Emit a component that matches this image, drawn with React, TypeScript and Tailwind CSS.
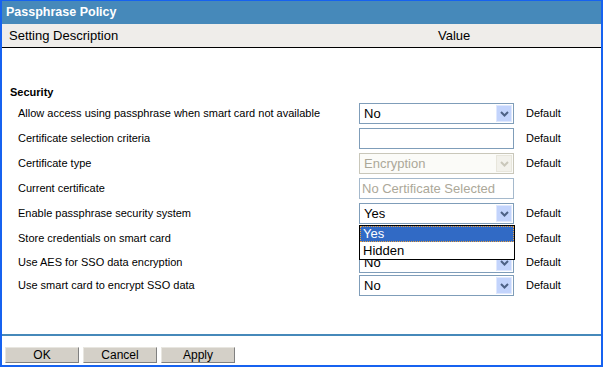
import React from "react";

const font = { fontFamily: '"Liberation Sans", Arial, sans-serif' };

function Arrow({ disabled }: { disabled?: boolean }) {
  return (
    <div
      className={
        disabled
          ? "absolute right-[1px] top-[1px] w-[16px] h-[17px] bg-[#f2f1eb] border border-[#e8e6dc] flex items-center justify-center"
          : "absolute right-[1px] top-[1px] w-[16px] h-[17px] bg-[#c3d4fc] border border-[#dfe8fe] flex items-center justify-center"
      }
    >
      <svg width="9" height="6" viewBox="0 0 9 6">
        <polyline
          points="1,1 4.5,4.5 8,1"
          fill="none"
          stroke={disabled ? "#c9c7ba" : "#4d6185"}
          strokeWidth="2"
        />
      </svg>
    </div>
  );
}

function Select({ value, disabled, children }: { value: string; disabled?: boolean; children?: React.ReactNode }) {
  return (
    <div
      className={
        disabled
          ? "relative w-[155px] h-[21px] border border-[#c9c7ba] bg-[#fbfbf8] flex items-center pl-[4px] text-[13px] text-[#aca899]"
          : "relative w-[155px] h-[21px] border border-[#7f9db9] bg-white flex items-center pl-[4px] text-[13px] text-black"
      }
    >
      <span className="leading-none">{value}</span>
      <Arrow disabled={disabled} />
      {children}
    </div>
  );
}

function Input({ value, disabled }: { value?: string; disabled?: boolean }) {
  return (
    <div
      className={
        disabled
          ? "w-[155px] h-[21px] border border-[#a5b9cc] bg-white flex items-center pl-[2px] text-[13px] text-[#aca899]"
          : "w-[155px] h-[21px] border border-[#7f9db9] bg-white flex items-center pl-[2px] text-[13px]"
      }
    >
      <span className="leading-none">{value}</span>
    </div>
  );
}

function Row({
  label,
  control,
  def = true,
  h = "h-[25px]",
}: {
  label: string;
  control: React.ReactNode;
  def?: boolean;
  h?: string;
}) {
  return (
    <div className={"flex items-center pl-4 " + h}>
      <div className="w-[341px] text-[11px] text-black">{label}</div>
      {control}
      {def && <div className="ml-[12px] text-[11px] text-black">Default</div>}
    </div>
  );
}

export default function App() {
  return (
    <div
      style={font}
      className="w-[603px] h-[367px] flex flex-col border-l-2 border-r-2 border-t border-b-2 border-[#1662f0] bg-white"
    >
      <div className="h-[23px] bg-[#4689ba] text-white font-bold text-[12.5px] pl-[4px] flex items-center">
        Passphrase Policy
      </div>
      <div className="h-[24px] bg-[#efedea] border-b border-black flex items-center text-[13px] text-black">
        <div className="w-[436px] pl-[7px]">Setting Description</div>
        <div>Value</div>
      </div>
      <div className="flex-1 pt-[37px]">
        <div className="pl-2 text-[11px] font-bold leading-[14px] text-black">Security</div>
        <div className="mt-[2px]">
          <Row label="Allow access using passphrase when smart card not available" control={<Select value="No" />} />
          <Row label="Certificate selection criteria" control={<Input />} />
          <Row label="Certificate type" control={<Select value="Encryption" disabled />} />
          <Row label="Current certificate" control={<Input value="No Certificate Selected" disabled />} def={false} />
          <Row
            label="Enable passphrase security system"
            control={
              <Select value="Yes">
                <div className="absolute left-[-1px] top-[21px] w-[156px] h-[35px] border border-black bg-white z-10 text-[13px] text-black">
                  <div className="h-[16px] bg-[#316ac5] text-white pl-[3px] flex items-center outline-1 outline-dotted outline-[#e8a040] -outline-offset-1">
                    Yes
                  </div>
                  <div className="h-[17px] pl-[3px] flex items-center">Hidden</div>
                </div>
              </Select>
            }
          />
          <Row label="Store credentials on smart card" control={<Select value="No" />} h="h-[24px]" />
          <Row label="Use AES for SSO data encryption" control={<Select value="No" />} />
          <Row label="Use smart card to encrypt SSO data" control={<Select value="No" />} h="h-[21px]" />
        </div>
      </div>
      <div className="h-[31px] border-t-2 border-[#4689ba] pt-[11px] pl-[3px] flex gap-[4px]">
        {["OK", "Cancel", "Apply"].map((t) => (
          <div
            key={t}
            className="w-[74px] h-[16px] bg-[#d4d0c8] border border-t-[#e8e6e0] border-l-[#e8e6e0] border-r-[#808080] border-b-[#808080] flex items-center justify-center text-[12px] text-black"
          >
            {t}
          </div>
        ))}
      </div>
    </div>
  );
}
